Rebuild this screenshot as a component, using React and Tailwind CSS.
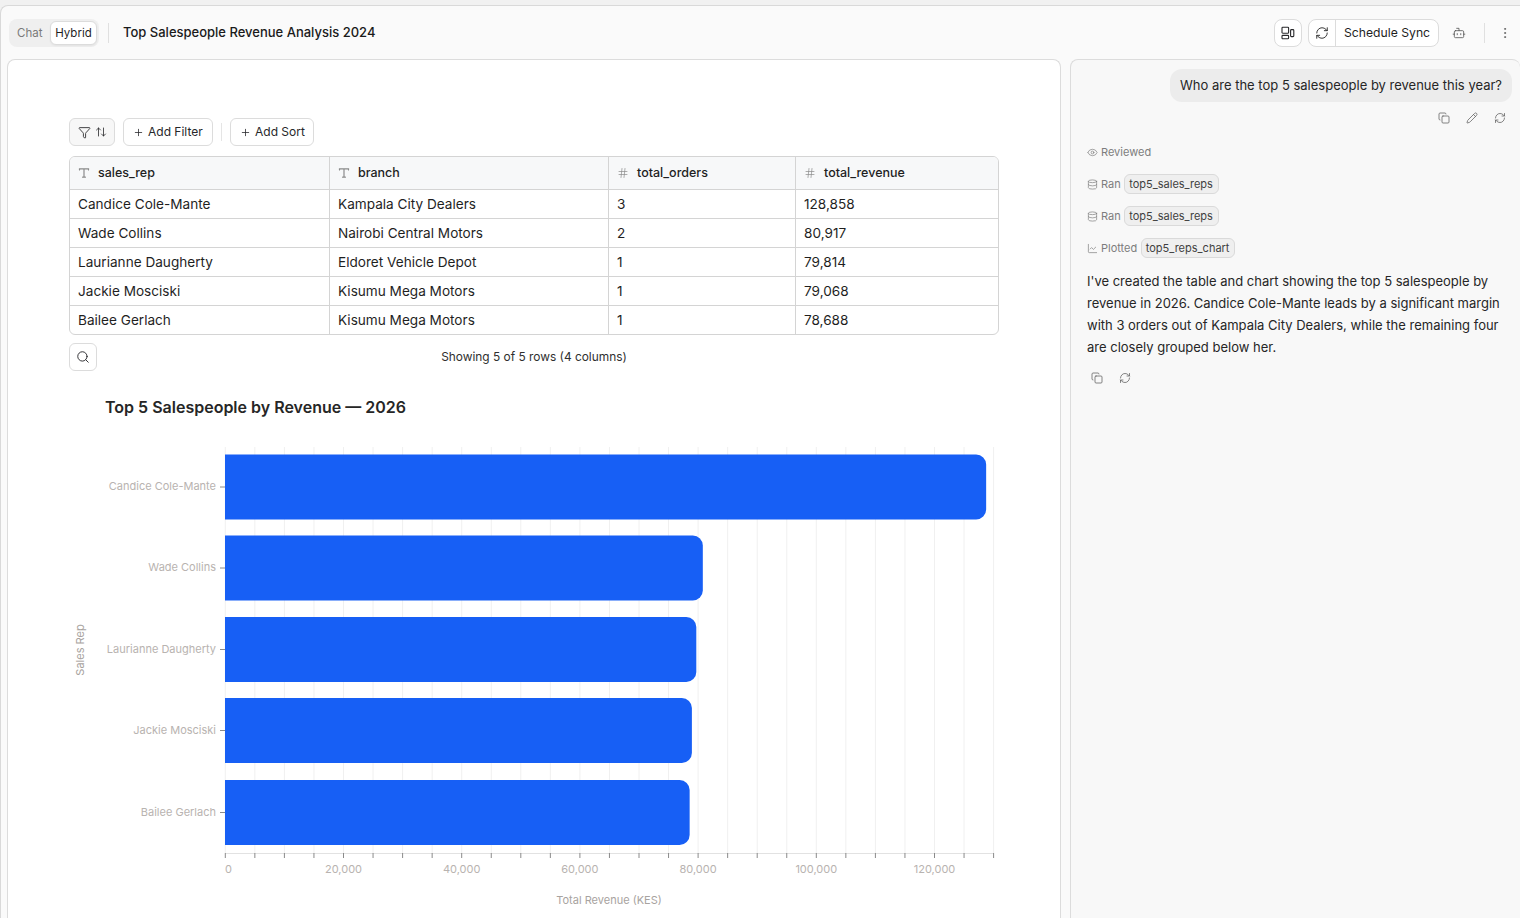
import React from "react";
import { ArrowUpDown, Bot, ChartLine, Copy, Database, EllipsisVertical, Eye, Funnel, Hash, Pencil, Plus, RefreshCw, Search } from "lucide-react";

const rows = [
  ["Candice Cole-Mante", "Kampala City Dealers", "3", "128,858"],
  ["Wade Collins", "Nairobi Central Motors", "2", "80,917"],
  ["Laurianne Daugherty", "Eldoret Vehicle Depot", "1", "79,814"],
  ["Jackie Mosciski", "Kisumu Mega Motors", "1", "79,068"],
  ["Bailee Gerlach", "Kisumu Mega Motors", "1", "78,688"],
];

const columns = [
  { name: "sales_rep", width: "w-[259px]", kind: "text" },
  { name: "branch", width: "w-[279px]", kind: "text" },
  { name: "total_orders", width: "w-[187px]", kind: "num" },
  { name: "total_revenue", width: "w-[205px]", kind: "num" },
];

const TypeIcon = () => (
  <svg width="12" height="12" viewBox="0 0 12 12" fill="none" stroke="#8b8b8b" strokeWidth="1.2" strokeLinecap="round" className="shrink-0">
    <path d="M1.5 3V1.8h9V3M6 1.8v8.4M4.6 10.2h2.8" />
  </svg>
);

const LayoutIcon = () => (
  <svg width="14" height="14" viewBox="0 0 14 14" fill="none" stroke="#27272a" strokeWidth="1.1">
    <rect x="1" y="1.2" width="6.6" height="6" rx="0.8" />
    <rect x="1" y="9.4" width="6.6" height="3.4" rx="0.8" />
    <rect x="9.6" y="3.6" width="3.2" height="7" rx="0.8" />
  </svg>
);

const Toolbar = () => (
  <div className="flex items-center h-7">
    <button className="flex items-center justify-center gap-1 w-[46px] h-7 rounded-md border border-[#dcdcdc] bg-[#f7f7f7] text-[#27272a]">
      <Funnel size={13} strokeWidth={1.6} />
      <ArrowUpDown size={12} strokeWidth={1.6} />
    </button>
    <button className="flex items-center gap-1 ml-2 pl-[9px] w-[90px] h-7 rounded-md border border-[#dcdcdc] bg-white text-[12px] text-[#27272a]">
      <Plus size={11} strokeWidth={1.7} />
      Add Filter
    </button>
    <div className="w-px h-[18px] mx-2 bg-[#e5e5e5]" />
    <button className="flex items-center gap-1 pl-[9px] w-[84px] h-7 rounded-md border border-[#dcdcdc] bg-white text-[12px] text-[#27272a]">
      <Plus size={11} strokeWidth={1.7} />
      Add Sort
    </button>
  </div>
);

const DataTable = () => (
  <div className="w-[930px] mt-[10px] rounded-md border border-[#d4d4d4] overflow-hidden">
    <table className="w-full table-fixed border-collapse text-[13.6px] text-[#1f1f1f]">
      <thead>
        <tr className="h-[32px] bg-[#f7f8f9] border-b border-[#d4d4d4]">
          {columns.map((c) => (
            <th key={c.name} className={`${c.width} pt-px pl-[8.5px] first:pl-2 pr-2 border-r last:border-r-0 border-[#d4d4d4] font-medium text-[12.5px] text-left`}>
              <span className="flex items-center gap-2">
                {c.kind === "text" ? <TypeIcon /> : <Hash size={12} strokeWidth={1.4} color="#8b8b8b" />}
                {c.name}
              </span>
            </th>
          ))}
        </tr>
      </thead>
      <tbody>
        {rows.map((r) => (
          <tr key={r[0]} className="group h-[29px] border-b last:border-b-0 border-[#d4d4d4]">
            {r.map((v, i) => (
              <td key={i} className="pt-px group-last:pt-0 pl-[8.5px] first:pl-2 pr-2 border-r last:border-r-0 border-[#d4d4d4]">{v}</td>
            ))}
          </tr>
        ))}
      </tbody>
    </table>
  </div>
);

const BAR_X = 156.3;
const PER_UNIT = 0.00591;
const ticks = Array.from({ length: 27 }, (_, i) => i * 5000);
const axisLabels = [20000, 40000, 60000, 80000, 100000, 120000];
const bars = [
  { name: "Candice Cole-Mante", value: 128858, y: 26.5 },
  { name: "Wade Collins", value: 80917, y: 107.5 },
  { name: "Laurianne Daugherty", value: 79814, y: 189 },
  { name: "Jackie Mosciski", value: 79068, y: 270 },
  { name: "Bailee Gerlach", value: 78688, y: 352 },
];

// chart origin sits at page x=69, y=428
const Chart = () => (
  <svg width="930" height="490" className="block mt-[10px]" fontFamily="Inter, sans-serif">
    {ticks.map((t) => (
      <line key={t} x1={BAR_X + t * PER_UNIT} x2={BAR_X + t * PER_UNIT} y1="19" y2="425" stroke="#f0f0f0" />
    ))}
    {bars.map((b) => (
      <g key={b.name}>
        <line x1="151" x2="156" y1={b.y + 32.5} y2={b.y + 32.5} stroke="#8a8a8a" />
        <text x="147" y={b.y + 35.5} textAnchor="end" fontSize="11" fill="#b8b3b0">{b.name}</text>
        <path
          d={`M156 ${b.y}H${BAR_X + b.value * PER_UNIT - 10.7}a10 10 0 0 1 10 10V${b.y + 55}a10 10 0 0 1 -10 10H156Z`}
          fill="#175ff5"
        />
      </g>
    ))}
    <line x1={BAR_X} x2={BAR_X + 130000 * PER_UNIT} y1="425.5" y2="425.5" stroke="#e2e2e2" />
    {ticks.map((t) => (
      <line key={t} x1={BAR_X + t * PER_UNIT} x2={BAR_X + t * PER_UNIT} y1="425" y2="430" stroke="#8a8a8a" />
    ))}
    <text x="156" y="445" fontSize="11" fill="#b8b3b0">0</text>
    {axisLabels.map((t) => (
      <text key={t} x={BAR_X + t * PER_UNIT} y="445" textAnchor="middle" fontSize="11" fill="#b8b3b0">{t.toLocaleString("en-US")}</text>
    ))}
    <text x="540" y="476" textAnchor="middle" fontSize="11" fill="#a8a3a0">Total Revenue (KES)</text>
    <text transform="translate(15 222) rotate(-90)" textAnchor="middle" fontSize="11" fill="#a8a3a0">Sales Rep</text>
  </svg>
);

const ToolStep = ({ icon: Icon, label, chip }) => (
  <div className="flex items-center h-5 text-[11px] text-[#7d7d7d]">
    <Icon size={11} strokeWidth={1.5} className="mr-[3px]" />
    <span>{label}</span>
    {chip && (
      <span className="ml-[3.5px] pl-1 pr-[5px] h-5 leading-[18px] rounded-md border border-[#dadada] bg-[#efefef] text-[#3f3f3f]">{chip}</span>
    )}
  </div>
);

const App = () => (
  <div className="h-[918px] overflow-hidden bg-[#f1f1f1] pt-[5px] font-['Inter',sans-serif]">
    <div className="h-full flex flex-col rounded-tl-lg border-t border-l border-[#d9d9d9] bg-[#fafafa]">
      <header className="flex items-center h-[53px] shrink-0 pl-[8px] pr-[8px]">
        <div className="flex items-center mt-px h-7 w-[90px] rounded-lg bg-[#efefef] pl-[8px] pr-[2px] justify-between">
          <span className="pt-px text-[11.5px] text-[#7a7a7a]">Chat</span>
          <span className="flex items-center justify-center pt-px w-[47px] h-6 rounded-md border border-[#dcdcdc] bg-white text-[11.5px] text-[#1f1f1f] shadow-xs">Hybrid</span>
        </div>
        <div className="w-px h-5 ml-[9px] mr-[14px] bg-[#e0e0e0]" />
        <h1 className="text-[13px] font-medium text-[#1a1a1a]">Top Salespeople Revenue Analysis 2024</h1>
        <div className="flex items-center ml-auto">
          <button className="flex items-center justify-center w-7 h-7 rounded-lg border border-[#dcdcdc] bg-white">
            <LayoutIcon />
          </button>
          <div className="flex items-center h-7 ml-[6px] w-[131px] rounded-lg border border-[#dcdcdc] bg-white text-[12.2px] text-[#1f1f1f]">
            <span className="flex items-center justify-center w-[27px] h-full border-r border-[#dcdcdc]">
              <RefreshCw size={14} strokeWidth={1.5} />
            </span>
            <span className="pt-px pl-2">Schedule Sync</span>
          </div>
          <Bot size={14} strokeWidth={1.4} color="#555" className="ml-[13px]" />
          <div className="w-px h-5 ml-[18px] bg-[#e0e0e0]" />
          <EllipsisVertical size={14} strokeWidth={1.6} color="#666" className="ml-[13px]" />
        </div>
      </header>

      <main className="flex flex-1 min-h-0 gap-[9px] pl-[6px]">
        <section className="w-[1054px] shrink-0 rounded-t-lg border border-b-0 border-[#dcdcdc] bg-white pt-[58px] pl-[61px]">
          <Toolbar />
          <DataTable />
          <div className="relative flex items-center justify-center w-[930px] h-7 mt-2 text-[11.9px] text-[#2f2f2f]">
            <button className="absolute left-0 flex items-center justify-center w-7 h-7 rounded-md border border-[#dcdcdc]">
              <Search size={14} strokeWidth={1.6} color="#27272a" />
            </button>
            Showing 5 of 5 rows (4 columns)
          </div>
          <h2 className="mt-[25px] ml-9 text-[16px] leading-[22px] font-semibold text-[#262626]">Top 5 Salespeople by Revenue — 2026</h2>
          <Chart />
        </section>

        <aside className="flex-1 rounded-t-lg border border-r-0 border-b-0 border-[#dcdcdc] bg-[#f8f8f8] pl-4 pr-2 pt-[9px]">
          <div className="flex justify-end">
            <div className="h-[33px] leading-[33px] px-[10px] rounded-xl bg-[#ececec] text-[13px] text-[#262626]">Who are the top 5 salespeople by revenue this year?</div>
          </div>
          <div className="flex justify-end gap-4 mt-[10px] pr-[6px] text-[#666]">
            <Copy size={12} strokeWidth={1.6} />
            <Pencil size={12} strokeWidth={1.6} />
            <RefreshCw size={12} strokeWidth={1.6} />
          </div>
          <div className="flex flex-col gap-3 mt-[18px]">
            <ToolStep icon={Eye} label="Reviewed" />
            <ToolStep icon={Database} label="Ran" chip="top5_sales_reps" />
            <ToolStep icon={Database} label="Ran" chip="top5_sales_reps" />
            <ToolStep icon={ChartLine} label="Plotted" chip="top5_reps_chart" />
          </div>
          <p className="mt-[12px] text-[13px] leading-[22px] text-[#262626]">
            I've created the table and chart showing the top 5 salespeople by revenue in 2026. Candice Cole-Mante leads by a significant margin with 3 orders out of Kampala City Dealers, while the remaining four are closely grouped below her.
          </p>
          <div className="flex gap-4 mt-[14px] pl-1 text-[#666]">
            <Copy size={12} strokeWidth={1.6} />
            <RefreshCw size={12} strokeWidth={1.6} />
          </div>
        </aside>
      </main>
    </div>
  </div>
);

export default App;
